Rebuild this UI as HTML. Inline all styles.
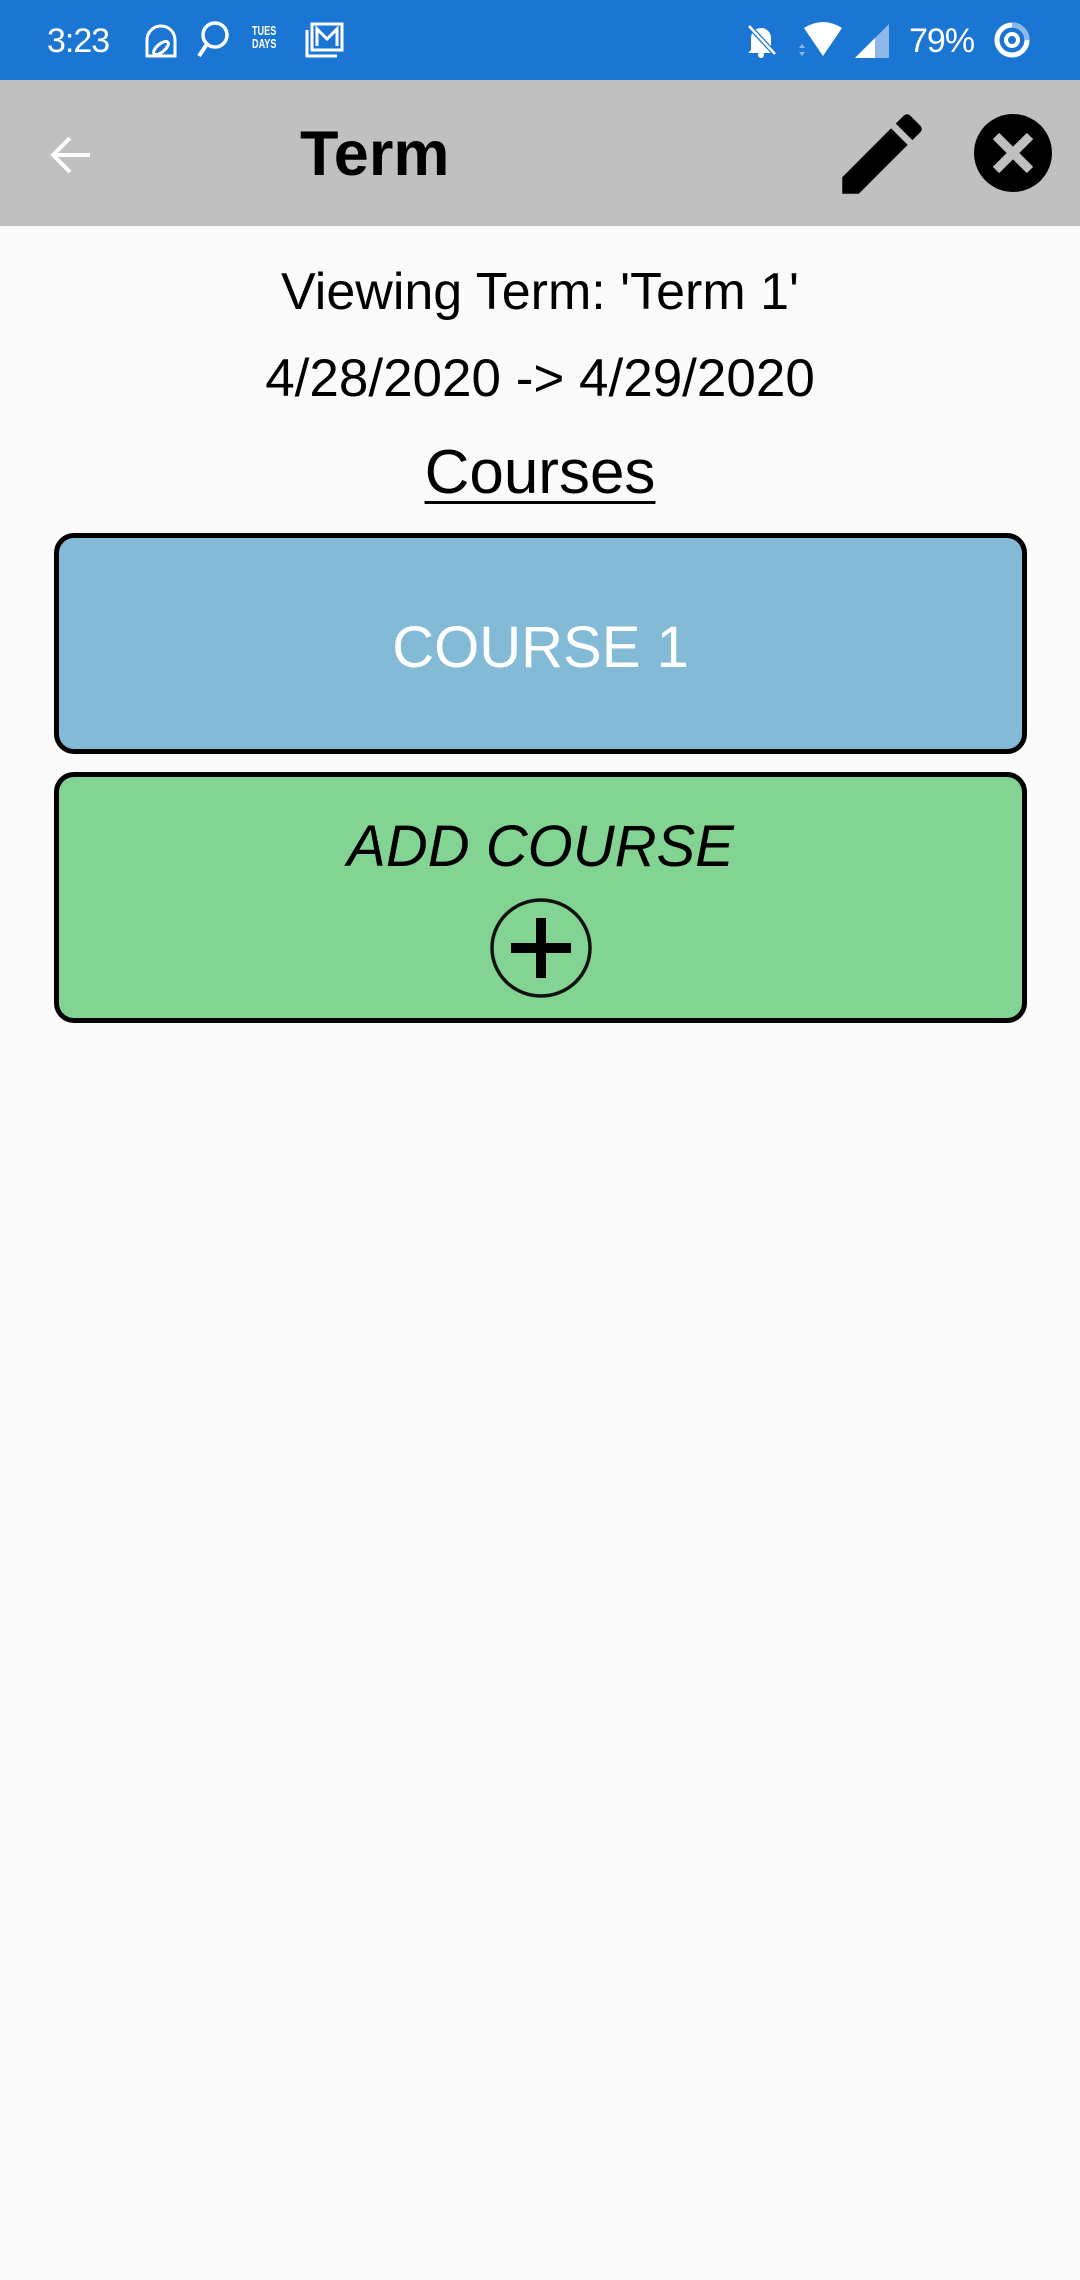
<!DOCTYPE html>
<html><head><meta charset="utf-8"><style>
html,body{margin:0;padding:0;width:1080px;height:2280px;background:#FAFAFA;overflow:hidden;font-family:"Liberation Sans",sans-serif;}
.sb{position:absolute;left:0;top:0;width:1080px;height:80px;background:#1B76D3;color:#fff;}
.ab{position:absolute;left:0;top:80px;width:1080px;height:146px;background:#C0C0C0;}
.t{position:absolute;left:0;width:1080px;text-align:center;color:#000;white-space:nowrap;}
.box{position:absolute;left:54px;width:973px;border:5px solid #000;border-radius:20px;box-sizing:border-box;}
</style></head><body>
<div class="sb">
 <div style="position:absolute;left:47px;top:22px;font-size:34px;letter-spacing:-1px;">3:23</div>
 <svg style="position:absolute;left:143px;top:22px" width="36" height="36" viewBox="0 0 36 36"><path d="M4 34V18a14 14 0 0 1 28 0v16z" fill="none" stroke="#fff" stroke-width="3"/><ellipse cx="18" cy="26" rx="9" ry="4" fill="none" stroke="#fff" stroke-width="3" transform="rotate(-40 18 26)"/></svg>
 <svg style="position:absolute;left:195px;top:20px" width="36" height="40" viewBox="0 0 36 40"><circle cx="20" cy="15" r="12" fill="none" stroke="#fff" stroke-width="3.5"/><path d="M12 24L4 36" stroke="#fff" stroke-width="4"/></svg>
 <div style="position:absolute;left:252px;top:24px;font-size:13px;font-weight:bold;line-height:13px;transform:scaleX(.7);transform-origin:left">TUES<br>DAYS</div>
 <svg style="position:absolute;left:305px;top:22px" width="40" height="36" viewBox="0 0 40 36"><rect x="7" y="2" width="30" height="26" fill="none" stroke="#fff" stroke-width="3"/><path d="M12 24V7l10 10 10-10v17" fill="none" stroke="#fff" stroke-width="3"/><path d="M2 8v26h30" fill="none" stroke="#fff" stroke-width="3"/></svg>
 <svg style="position:absolute;left:743px;top:22px" width="36" height="36" viewBox="0 0 36 36"><path d="M8 28V16a10 10 0 0 1 20 0v12l3 3H5z" fill="#fff"/><circle cx="18" cy="33" r="3" fill="#fff"/><path d="M6 4L32 32" stroke="#1B76D3" stroke-width="5"/><path d="M6 4L32 32" stroke="#fff" stroke-width="2.5"/></svg>
 <svg style="position:absolute;left:796px;top:22px" width="50" height="36" viewBox="0 0 50 36"><path d="M8 6Q27 -6 46 6L27 34z" fill="#fff"/><path d="M3 26l3-4 3 4zM3 30l3 4 3-4z" fill="#8fb8ea"/></svg>
 <svg style="position:absolute;left:855px;top:24px" width="36" height="34" viewBox="0 0 36 34"><path d="M34 0V34H0z" fill="#8fb8ea"/><path d="M20 14V34H0z" fill="#fff"/></svg>
 <div style="position:absolute;left:909px;top:22px;font-size:34px;letter-spacing:-1px;">79%</div>
 <svg style="position:absolute;left:992px;top:20px" width="40" height="40" viewBox="0 0 40 40"><circle cx="20" cy="20" r="15" fill="none" stroke="#fff" stroke-width="5"/><circle cx="20" cy="20" r="6" fill="none" stroke="#fff" stroke-width="4"/><path d="M20 5A15 15 0 0 1 35 20" fill="none" stroke="#8fb8ea" stroke-width="5"/></svg>
</div>
<div class="ab">
 <svg style="position:absolute;left:48px;top:52px" width="46" height="46" viewBox="0 0 46 46"><path d="M42 23H6M22 6L5 23l17 17" fill="none" stroke="#fff" stroke-width="4"/></svg>
 <div style="position:absolute;left:300px;top:38px;font-size:63px;font-weight:bold;color:#000;">Term</div>
 <svg style="position:absolute;left:829px;top:21px" width="106" height="106" viewBox="0 0 24 24"><path d="M3 17.25V21h3.75L17.81 9.94l-3.75-3.75L3 17.25zM20.71 7.04c.39-.39.39-1.02 0-1.41l-2.34-2.34c-.39-.39-1.02-.39-1.41 0l-1.83 1.83 3.75 3.75 1.83-1.83z" fill="#000"/></svg>
 <svg style="position:absolute;left:974px;top:34px" width="78" height="78" viewBox="0 0 78 78"><circle cx="39" cy="39" r="39" fill="#000"/><path d="M22 22L56 56M56 22L22 56" stroke="#C0C0C0" stroke-width="9"/></svg>
</div>
<div class="t" style="top:262px;font-size:52px;">Viewing Term: 'Term 1'</div>
<div class="t" style="top:348px;font-size:53px;">4/28/2020 -&gt; 4/29/2020</div>
<div class="t" style="top:437px;font-size:62px;"><span style="text-decoration:underline;text-decoration-thickness:3px;text-underline-offset:8px;">Courses</span></div>
<div class="box" style="top:533px;height:221px;background:#83BBD6;"><div class="t" style="left:0;width:963px;top:76px;font-size:58px;color:#fff;">COURSE 1</div></div>
<div class="box" style="top:772px;height:251px;background:#83D492;">
 <div class="t" style="left:0;width:963px;top:36px;font-size:58px;font-style:italic;">ADD COURSE</div>
 <svg style="position:absolute;left:430px;top:120px" width="104" height="102" viewBox="0 0 104 102"><ellipse cx="52" cy="51" rx="49" ry="48" fill="none" stroke="#111" stroke-width="3.5"/><path d="M52 21V81M22 51H82" stroke="#000" stroke-width="10"/></svg>
</div>
</body></html>
